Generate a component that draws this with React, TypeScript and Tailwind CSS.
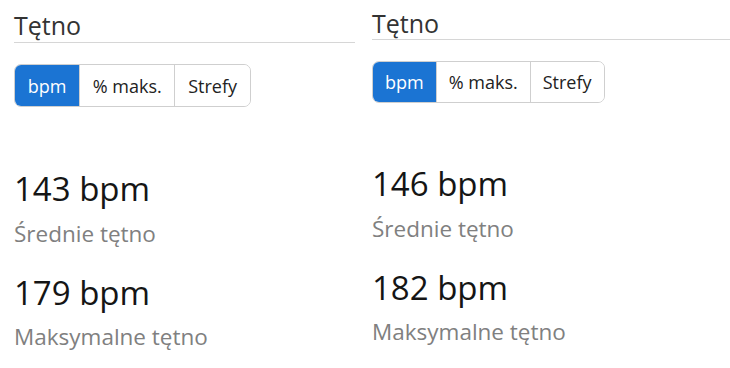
const font = { fontFamily: '"Open Sans", "Noto Sans", sans-serif' };

type Panel = {
  avg: number;
  max: number;
  pad: string;
  rule: string;
  tabsTop: string;
  tabsH: string;
  tabPad: string;
  valTop: string;
};

function HeartPanel({ p, className }: { p: Panel; className: string }) {
  const tabs = ["bpm", "% maks.", "Strefy"];
  return (
    <div className={className}>
      <div className={`${p.pad} ${p.rule} border-b border-[#d6d6d6]`}>
        <h2 className="text-[25px] leading-[32px] text-[#333]">Tętno</h2>
      </div>
      <div className={`${p.tabsTop} ${p.tabsH} flex w-fit rounded-[7px] border border-[#cfcfcf] overflow-hidden`}>
        {tabs.map((t, i) => (
          <button
            key={t}
            className={
              `${p.tabPad} text-[18px] leading-none ` +
              (i === 0
                ? "bg-[#1b74d3] text-white"
                : "bg-white text-[#222] border-l border-[#cfcfcf]")
            }
          >
            {t}
          </button>
        ))}
      </div>
      <div className={p.valTop}>
        <div className="text-[33px] leading-[40px] text-[#151515]">{p.avg} bpm</div>
        <div className="mt-[11px] text-[22.5px] leading-[28px] text-[#808080]">Średnie tętno</div>
        <div className="mt-[25px] text-[33px] leading-[40px] text-[#151515]">{p.max} bpm</div>
        <div className="mt-[10px] text-[22.5px] leading-[28px] text-[#808080]">Maksymalne tętno</div>
      </div>
    </div>
  );
}

export default function App() {
  return (
    <div className="w-[730px] h-[368px] bg-white flex overflow-hidden" style={font}>
      <HeartPanel
        className="ml-[14px] w-[341px]"
        p={{ avg: 143, max: 179, pad: "pt-[9px]", rule: "pb-[1px]", tabsTop: "mt-[21px]", tabsH: "h-[43px]", tabPad: "px-[12.7px]", valTop: "mt-[62px]" }}
      />
      <HeartPanel
        className="ml-[17px] flex-1"
        p={{ avg: 146, max: 182, pad: "pt-[7px]", rule: "pb-[0px]", tabsTop: "mt-[21px]", tabsH: "h-[42px]", tabPad: "px-[12px]", valTop: "mt-[61px]" }}
      />
    </div>
  );
}
